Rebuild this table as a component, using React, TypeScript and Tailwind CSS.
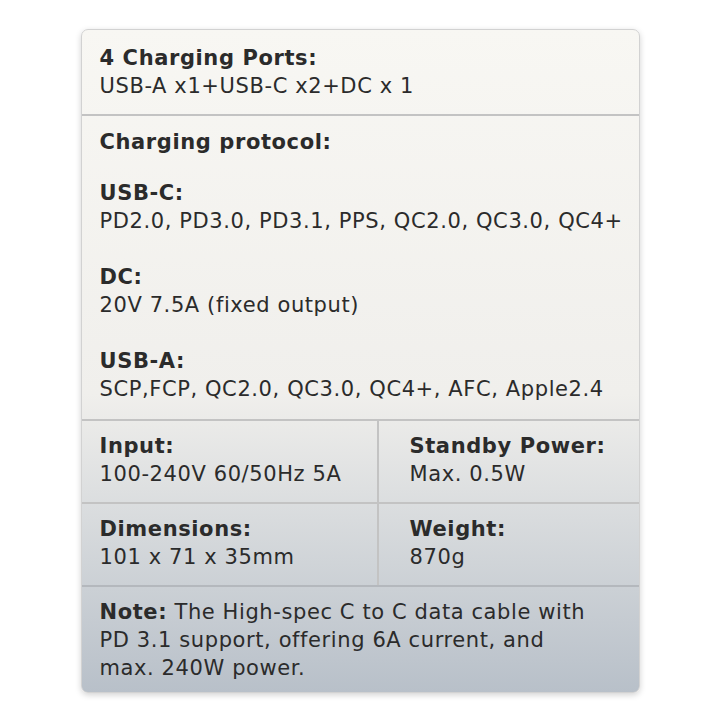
const protocols = [
  { label: "USB-C:", value: "PD2.0, PD3.0, PD3.1, PPS, QC2.0, QC3.0, QC4+" },
  { label: "DC:", value: "20V 7.5A (fixed output)" },
  { label: "USB-A:", value: "SCP,FCP, QC2.0, QC3.0, QC4+, AFC, Apple2.4" },
];

const gridRows = [
  [
    { label: "Input:", value: "100-240V 60/50Hz 5A" },
    { label: "Standby Power:", value: "Max. 0.5W" },
  ],
  [
    { label: "Dimensions:", value: "101 x 71 x 35mm" },
    { label: "Weight:", value: "870g" },
  ],
];

export default function App() {
  return (
    <div className="min-h-[720px] bg-white pt-[29px] font-['DejaVu_Sans',sans-serif] text-[21px] leading-[28px] tracking-[0.6px] text-[#2b2b2b]">
      <div className="mx-auto w-[559px] overflow-hidden rounded-[7px] border border-[#d2d2d2] bg-gradient-to-b from-[#f8f7f3] via-[#f0efec] via-55% to-[#b8c0c9] shadow-[0_2px_6px_rgba(0,0,0,0.18)]">
        <div className="px-[18px] pt-[14px] pb-[14px]">
          <div className="font-bold">4 Charging Ports:</div>
          <div>USB-A x1+USB-C x2+DC x 1</div>
        </div>

        <div className="border-t-2 border-[#c3c3c3] px-[18px] pt-[12px] pb-[16px]">
          <div className="font-bold">Charging protocol:</div>
          <div className="mt-[23px] flex flex-col gap-[28px]">
            {protocols.map((p) => (
              <div key={p.label}>
                <div className="font-bold">{p.label}</div>
                <div className="whitespace-nowrap">{p.value}</div>
              </div>
            ))}
          </div>
        </div>

        {gridRows.map((row, i) => (
          <div key={i} className="grid grid-cols-[297px_1fr] border-t-2 border-[#c3c3c3]">
            <div className="border-r-2 border-[#c3c3c3] px-[18px] pt-[11px] pb-[14px]">
              <div className="font-bold">{row[0].label}</div>
              <div className="whitespace-nowrap">{row[0].value}</div>
            </div>
            <div className="px-[31px] pt-[11px] pb-[14px]">
              <div className="font-bold">{row[1].label}</div>
              <div>{row[1].value}</div>
            </div>
          </div>
        ))}

        <div className="border-t-2 border-[#b4b8bd] px-[18px] pt-[11px] pb-[10px] whitespace-nowrap">
          <span className="font-bold">Note:</span> The High-spec C to C data cable with
          <br />
          PD 3.1 support, offering 6A current, and
          <br />
          max. 240W power.
        </div>
      </div>
    </div>
  );
}
